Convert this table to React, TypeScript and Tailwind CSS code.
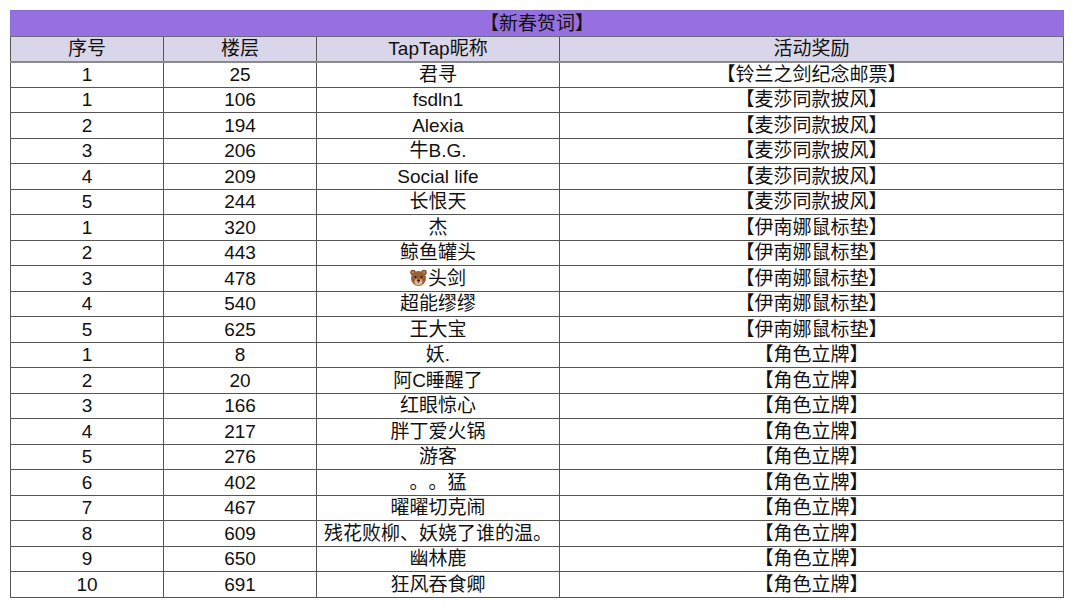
const rows: [string, string, string, string][] = [
  ['1', '25', '君寻', '【铃兰之剑纪念邮票】'],
  ['1', '106', 'fsdln1', '【麦莎同款披风】'],
  ['2', '194', 'Alexia', '【麦莎同款披风】'],
  ['3', '206', '牛B.G.', '【麦莎同款披风】'],
  ['4', '209', 'Social life', '【麦莎同款披风】'],
  ['5', '244', '长恨天', '【麦莎同款披风】'],
  ['1', '320', '杰', '【伊南娜鼠标垫】'],
  ['2', '443', '鲸鱼罐头', '【伊南娜鼠标垫】'],
  ['3', '478', '@@BEAR@@头剑', '【伊南娜鼠标垫】'],
  ['4', '540', '超能缪缪', '【伊南娜鼠标垫】'],
  ['5', '625', '王大宝', '【伊南娜鼠标垫】'],
  ['1', '8', '妖.', '【角色立牌】'],
  ['2', '20', '阿C睡醒了', '【角色立牌】'],
  ['3', '166', '红眼惊心', '【角色立牌】'],
  ['4', '217', '胖丁爱火锅', '【角色立牌】'],
  ['5', '276', '游客', '【角色立牌】'],
  ['6', '402', '。。猛', '【角色立牌】'],
  ['7', '467', '曜曜切克闹', '【角色立牌】'],
  ['8', '609', '残花败柳、妖娆了谁的温。', '【角色立牌】'],
  ['9', '650', '幽林鹿', '【角色立牌】'],
  ['10', '691', '狂风吞食卿', '【角色立牌】'],
];

function Bear() {
  return (
    <svg width="17" height="18" viewBox="0 0 34 36" className="mr-[1px] inline-block align-[-2px]">
      <circle cx="6" cy="7" r="5.5" fill="#7a4a2b" />
      <circle cx="28" cy="7" r="5.5" fill="#7a4a2b" />
      <circle cx="6" cy="7" r="2.8" fill="#c98a5c" />
      <circle cx="28" cy="7" r="2.8" fill="#c98a5c" />
      <ellipse cx="17" cy="19" rx="15" ry="15" fill="#9a5f37" />
      <ellipse cx="17" cy="26" rx="8" ry="6.5" fill="#e2b48a" />
      <ellipse cx="17" cy="23" rx="3.4" ry="2.3" fill="#2a1a12" />
      <path d="M17 25v3" stroke="#2a1a12" strokeWidth="1.2" />
      <circle cx="11" cy="16" r="2" fill="#2a1a12" />
      <circle cx="23" cy="16" r="2" fill="#2a1a12" />
    </svg>
  );
}

function Nick({ text }: { text: string }) {
  if (text.startsWith('@@BEAR@@')) {
    return (
      <span>
        <Bear />
        {text.replace('@@BEAR@@', '')}
      </span>
    );
  }
  return <span>{text}</span>;
}

export default function App() {
  return (
    <div className="min-h-[612px] w-[1080px] bg-white pt-[10px] pl-[10px]">
      <table
        className="w-[1053px] table-fixed border-collapse text-center text-[19px] leading-none text-[#111] [text-spacing-trim:space-all]"
        style={{ fontFamily: '"Liberation Sans", "Noto Sans CJK SC", sans-serif' }}>
        <colgroup>
          <col className="w-[153px]" />
          <col className="w-[153px]" />
          <col className="w-[243px]" />
          <col className="w-[504px]" />
        </colgroup>
        <thead>
          <tr className="h-[26px] bg-[#9670e0]">
            <th colSpan={4} className="border border-[#8a6fcf] border-b-[#6b6b7a] font-normal">
              【新春贺词】
            </th>
          </tr>
          <tr className="h-[25px] bg-[#d9d6ea]">
            <th className="border border-[#555] border-b-2 border-b-[#8a8a8a] font-normal">序号</th>
            <th className="border border-[#555] border-b-2 border-b-[#8a8a8a] font-normal">楼层</th>
            <th className="border border-[#555] border-b-2 border-b-[#8a8a8a] font-normal">TapTap昵称</th>
            <th className="border border-[#555] border-b-2 border-b-[#8a8a8a] font-normal">活动奖励</th>
          </tr>
        </thead>
        <tbody>
          {rows.map((r, i) => (
            <tr key={i} className="h-[25.5px]">
              <td className="border border-[#555]">{r[0]}</td>
              <td className="border border-[#555]">{r[1]}</td>
              <td className="border border-[#555]">
                <Nick text={r[2]} />
              </td>
              <td className="border border-[#555]">{r[3]}</td>
            </tr>
          ))}
        </tbody>
      </table>
    </div>
  );
}
